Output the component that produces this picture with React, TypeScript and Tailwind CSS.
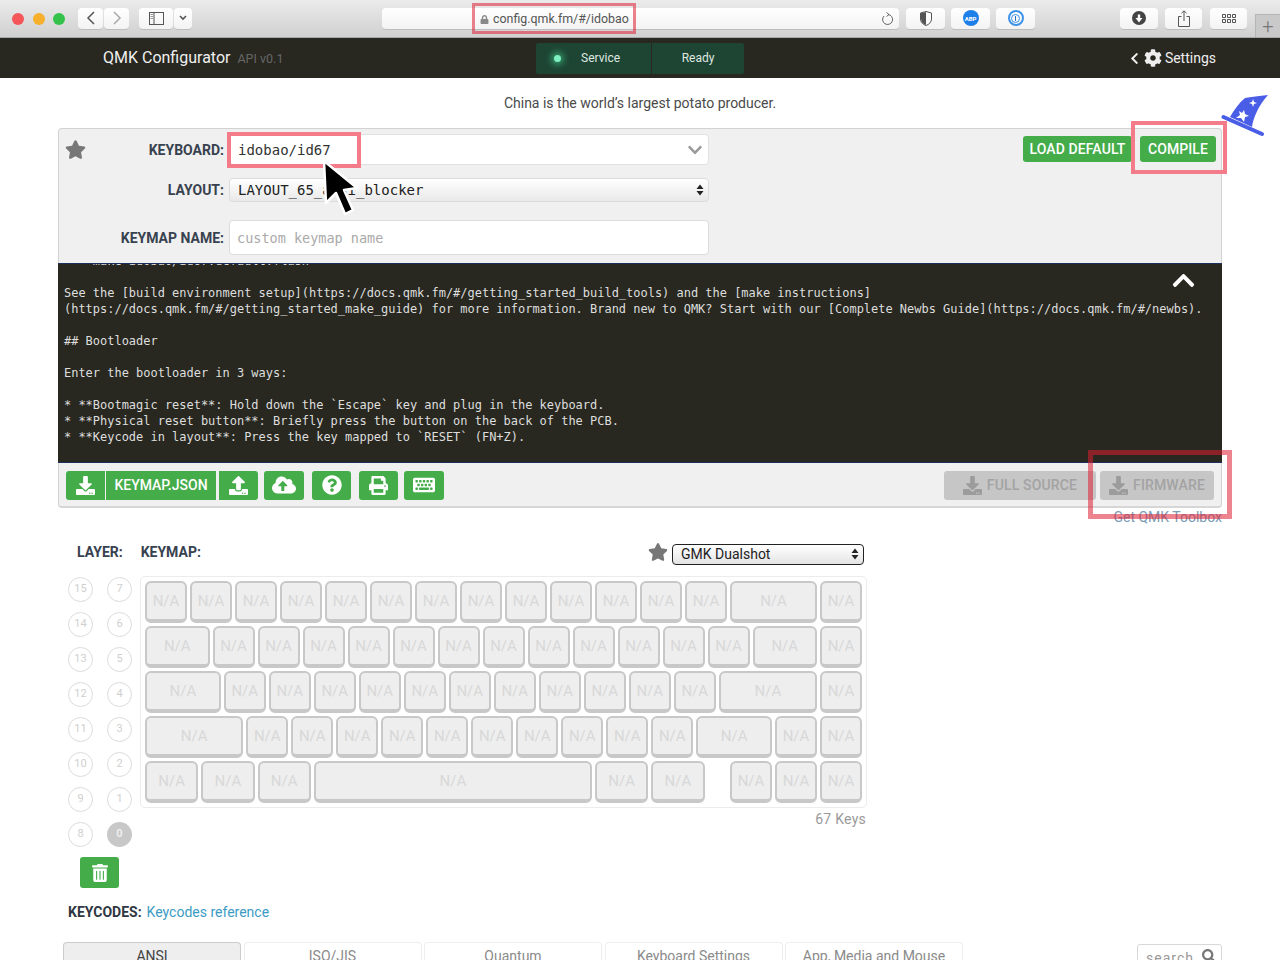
import { FaCloudUploadAlt, FaCog, FaChevronDown, FaChevronLeft, FaChevronUp, FaDownload, FaKeyboard, FaLock, FaPrint, FaQuestionCircle, FaSearch, FaStar, FaTrashAlt, FaUpload } from 'react-icons/fa';

const TERMINAL = `    make idobao/id67:default:flash

See the [build environment setup](https://docs.qmk.fm/#/getting_started_build_tools) and the [make instructions]
(https://docs.qmk.fm/#/getting_started_make_guide) for more information. Brand new to QMK? Start with our [Complete Newbs Guide](https://docs.qmk.fm/#/newbs).

## Bootloader

Enter the bootloader in 3 ways:

* **Bootmagic reset**: Hold down the \`Escape\` key and plug in the keyboard.
* **Physical reset button**: Briefly press the button on the back of the PCB.
* **Keycode in layout**: Press the key mapped to \`RESET\` (FN+Z).`;

// widths in key units, negative is an empty gap
const ROWS = [
  [1, 1, 1, 1, 1, 1, 1, 1, 1, 1, 1, 1, 1, 2, 1],
  [1.5, 1, 1, 1, 1, 1, 1, 1, 1, 1, 1, 1, 1, 1.5, 1],
  [1.75, 1, 1, 1, 1, 1, 1, 1, 1, 1, 1, 1, 2.25, 1],
  [2.25, 1, 1, 1, 1, 1, 1, 1, 1, 1, 1, 1.75, 1, 1],
  [1.25, 1.25, 1.25, 6.25, 1.25, 1.25, -0.5, 1, 1, 1],
];

const LAYERS = [15, 7, 14, 6, 13, 5, 12, 4, 11, 3, 10, 2, 9, 1, 8, 0];
const TABS = ['ANSI', 'ISO/JIS', 'Quantum', 'Keyboard Settings', 'App, Media and Mouse'];

function ChromeButton({ className, children }: { className: string; children?: React.ReactNode }) {
  return (
    <div className={`flex h-[22px] items-center justify-center rounded-[4px] border-b border-[#bdbdbd] bg-gradient-to-b from-white to-[#f3f3f3] ${className}`}>
      {children}
    </div>
  );
}

function GreenButton({ className, children }: { className: string; children?: React.ReactNode }) {
  return (
    <div className={`flex h-[29px] items-center justify-center rounded-[3px] bg-[#45ac4a] text-white ${className}`}>
      {children}
    </div>
  );
}

function Key({ units }: { units: number }) {
  if (units < 0) return <div className="h-[42px]" style={{ width: -units * 45 - 3 }} />;
  return (
    <div
      className="flex h-[42px] items-center justify-center rounded-[6px] border-2 border-b-[4px] border-[#c8c8c8] bg-[#eeeeee] pt-[1px] text-[15px] text-[#d8d8d8]"
      style={{ width: units * 45 - 3 }}
    >
      N/A
    </div>
  );
}

export default function App() {
  return (
    <div className="relative h-[960px] w-[1280px] overflow-hidden bg-white font-['Roboto',sans-serif] text-[14px] text-[#444]">
      {/* safari toolbar */}
      <div className="flex h-[38px] items-center border-b border-[#a9a9a9] bg-gradient-to-b from-[#ebebeb] to-[#d0d0d0] pl-[12px]">
        <div className="h-[12px] w-[12px] rounded-full bg-[#f4565a]" />
        <div className="ml-[9px] h-[12px] w-[12px] rounded-full bg-[#f6b02c]" />
        <div className="ml-[8px] h-[12px] w-[12px] rounded-full bg-[#35c24a]" />
        <ChromeButton className="ml-[13px] w-[25px]">
          <svg width="10" height="16" viewBox="0 0 10 16" fill="none" stroke="#555" strokeWidth="1.5"><path d="M8 2 L2 8 L8 14" /></svg>
        </ChromeButton>
        <ChromeButton className="ml-[1px] w-[25px]">
          <svg width="10" height="16" viewBox="0 0 10 16" fill="none" stroke="#aaa" strokeWidth="1.5"><path d="M2 2 L8 8 L2 14" /></svg>
        </ChromeButton>
        <ChromeButton className="ml-[10px] w-[34px]">
          <svg width="15" height="13" viewBox="0 0 15 13" fill="none" stroke="#555"><rect x="0.5" y="0.5" width="14" height="12" /><path d="M5 0.5 V12.5" /><path d="M1.5 2.5 H4 M1.5 4.5 H4 M1.5 6.5 H4" stroke="#999" /></svg>
        </ChromeButton>
        <ChromeButton className="ml-[1px] w-[18px]">
          <svg width="8" height="6" viewBox="0 0 8 6" fill="none" stroke="#555" strokeWidth="1.6"><path d="M1 1 L4 4 L7 1" /></svg>
        </ChromeButton>
        <ChromeButton className="relative ml-[190px] w-[517px] !justify-start pl-[98px]">
          <div className="flex items-center gap-[4px] pt-[3px] text-[12.4px] text-[#555]">
            <FaLock className="text-[9px] text-[#888]" />
            config.qmk.fm/#/idobao
          </div>
          <svg className="absolute right-[5px] top-[4px]" width="13" height="14" viewBox="0 0 13 14" fill="none" stroke="#666"><path d="M7 2.5 A5 5 0 1 1 3 4" /><path d="M5.5 0.5 L8 2.5 L5.5 4.5" /></svg>
        </ChromeButton>
        <ChromeButton className="ml-[7px] w-[39px]">
          <svg width="12" height="15" viewBox="0 0 12 15"><path d="M6 0.5 L11.5 2 V8 C11.5 11 9 13.5 6 14.5 C3 13.5 0.5 11 0.5 8 V2 Z" fill="#fff" stroke="#555" /><path d="M1 2.3 L6 1 V14 C3 13 1 11 1 8 Z" fill="#555" /></svg>
        </ChromeButton>
        <ChromeButton className="ml-[6px] w-[39px]">
          <div className="flex h-[16px] w-[16px] items-center justify-center rounded-full bg-[#1f7fe8] text-[6px] font-bold text-white">ABP</div>
        </ChromeButton>
        <ChromeButton className="ml-[6px] w-[39px]">
          <div className="flex h-[16px] w-[16px] items-center justify-center rounded-full border-[2px] border-[#3c93e8]">
            <div className="flex h-[9px] w-[9px] items-center justify-center rounded-full border border-[#3c93e8]">
              <div className="h-[5px] w-[1.5px] bg-[#1f6fc8]" />
            </div>
          </div>
        </ChromeButton>
        <ChromeButton className="ml-[85px] w-[38px]">
          <div className="flex h-[14px] w-[14px] items-center justify-center rounded-full bg-[#444]">
            <svg width="8" height="9" viewBox="0 0 8 9" fill="#fff"><path d="M2.8 0.5 H5.2 V4 H7.5 L4 8.5 L0.5 4 H2.8 Z" /></svg>
          </div>
        </ChromeButton>
        <ChromeButton className="ml-[7px] w-[37px]">
          <svg width="12" height="17" viewBox="0 0 12 17" fill="none" stroke="#555"><path d="M3.5 6.5 H0.5 V16.5 H11.5 V6.5 H8.5" /><path d="M6 11 V1 M3.5 3.2 L6 0.8 L8.5 3.2" /></svg>
        </ChromeButton>
        <ChromeButton className="ml-[8px] w-[37px]">
          <svg width="14" height="9" viewBox="0 0 14 9" fill="none" stroke="#555"><path d="M0.5 0.5 h3 v3 h-3 z M5.5 0.5 h3 v3 h-3 z M10.5 0.5 h3 v3 h-3 z M0.5 5.5 h3 v3 h-3 z M5.5 5.5 h3 v3 h-3 z M10.5 5.5 h3 v3 h-3 z" /></svg>
        </ChromeButton>
        <div className="ml-[8px] flex h-[23px] w-[25px] items-center justify-center self-end border-l border-t border-[#b5b5b5] bg-[#c9c9c9] text-[20px] font-light leading-none text-[#777]">+</div>
      </div>

      {/* nav bar */}
      <div className="flex h-[40px] items-center bg-[#282820] pl-[103px] pr-[64px] text-white">
        <div className="flex w-[433px] items-baseline">
          <span className="text-[16px] text-[#f0f0f0]">QMK Configurator</span>
          <span className="ml-[7px] text-[12.5px] text-[#666]">API v0.1</span>
        </div>
        <div className="flex h-[31px] text-[12px] text-[#dfe8e0]">
          <div className="flex w-[115px] items-center rounded-l-[2px] bg-[#1e4534] pl-[18px]">
            <div className="h-[7px] w-[7px] rounded-full bg-[#7ff0c0] shadow-[0_0_6px_3px_rgba(70,220,150,0.55)]" />
            <span className="ml-[20px]">Service</span>
          </div>
          <div className="ml-[1px] flex w-[92px] items-center justify-center rounded-r-[2px] bg-[#1e4534]">Ready</div>
        </div>
        <div className="ml-auto flex items-center text-[14px] text-[#eee]">
          <FaChevronLeft className="text-[13px]" />
          <FaCog className="ml-[3px] text-[18px]" />
          <span className="ml-[3px]">Settings</span>
        </div>
      </div>

      <div className="flex h-[50px] items-center justify-center text-[14px] text-[#4a4a4a]">China is the world&rsquo;s largest potato producer.</div>

      {/* main panel */}
      <div className="mx-[58px] w-[1164px] rounded-[4px] border-b-2 border-l border-r border-t border-[#d2d2d2] border-b-[#d6d6d6] bg-[#f0f0f0]">
        <div className="flex h-[134px] justify-between pr-[5px] pt-[5px]">
          <div className="w-[660px] font-bold text-[#38424f]">
            <div className="flex h-[31px] items-center">
              <div className="flex w-[165px] items-center justify-between pl-[6px]">
                <FaStar className="text-[21px] text-[#777]" />
                <span className="pt-[1px] text-[14px]">KEYBOARD:</span>
              </div>
              <div className="ml-[5px] flex h-[31px] w-[480px] items-center justify-between rounded-[4px] border border-[#e0e0e0] bg-white pl-[8px] pr-[5px] pt-[1px] font-['DejaVu_Sans_Mono',monospace] text-[14px] font-normal text-[#333]">
                idobao/id67
                <FaChevronDown className="text-[16px] text-[#999]" />
              </div>
            </div>
            <div className="mt-[13px] flex h-[24px] items-center">
              <div className="w-[165px] text-right">LAYOUT:</div>
              <div className="ml-[5px] flex h-[24px] w-[480px] items-center justify-between rounded-[4px] border border-[#dcdcdc] bg-gradient-to-b from-white to-[#e9e9e9] pl-[8px] pr-[4px] font-['DejaVu_Sans_Mono',monospace] text-[14px] font-normal text-[#222]">
                LAYOUT_65_ansi_blocker
                <svg width="8" height="12" viewBox="0 0 8 12" fill="#222"><path d="M4 0.5 L7.5 5 H0.5 Z M4 11.5 L0.5 7 H7.5 Z" /></svg>
              </div>
            </div>
            <div className="mt-[18px] flex h-[35px] items-center">
              <div className="w-[165px] pt-[1px] text-right">KEYMAP NAME:</div>
              <div className="ml-[5px] flex h-[35px] w-[480px] items-center rounded-[4px] border border-[#dcdcdc] bg-white pl-[7px] pt-[1px] font-['DejaVu_Sans_Mono',monospace] text-[13.5px] font-normal text-[#aaa]">custom keymap name</div>
            </div>
          </div>
          <div className="mt-[2px] flex h-[26px] gap-[8px] text-[14px] font-medium tracking-[0.1px]">
            <GreenButton className="!h-[26px] w-[109px]">LOAD DEFAULT</GreenButton>
            <GreenButton className="!h-[26px] w-[76px]">COMPILE</GreenButton>
          </div>
        </div>

        {/* terminal */}
        <div className="relative -mx-px h-[200px] overflow-hidden border-y border-[#1c2e5e] bg-[#282820] pl-[6px]">
          <pre className="-mt-[11px] font-['DejaVu_Sans_Mono',monospace] text-[11.97px] leading-[16px] text-[#dedede]">{TERMINAL}</pre>
          <FaChevronUp className="absolute right-[26px] top-[4px] text-[25px] text-white" />
        </div>

        {/* toolbar */}
        <div className="flex h-[43px] items-center justify-between pl-[7px] pr-[7px] pt-[1px]">
          <div className="flex text-[14px] font-medium">
            <GreenButton className="w-[39px] rounded-r-none"><FaDownload className="text-[19px]" /></GreenButton>
            <GreenButton className="ml-[1px] w-[110px] rounded-l-none rounded-r-none">KEYMAP.JSON</GreenButton>
            <GreenButton className="ml-[3px] w-[39px] rounded-l-none"><FaUpload className="text-[19px]" /></GreenButton>
            <GreenButton className="ml-[6px] w-[40px]"><FaCloudUploadAlt className="text-[24px]" /></GreenButton>
            <GreenButton className="ml-[8px] w-[39px]"><FaQuestionCircle className="text-[20px]" /></GreenButton>
            <GreenButton className="ml-[8px] w-[39px]"><FaPrint className="text-[19px]" /></GreenButton>
            <GreenButton className="ml-[6px] w-[40px]"><FaKeyboard className="text-[22px]" /></GreenButton>
          </div>
          <div className="flex text-[14px] font-medium tracking-[0.15px] text-[#a3a3a3]">
            <div className="flex h-[29px] w-[152px] items-center justify-center gap-[5px] rounded-[3px] bg-[#c6c6c6]"><FaDownload className="text-[19px] text-[#9c9c9c]" />FULL SOURCE</div>
            <div className="ml-[4px] flex h-[29px] w-[114px] items-center justify-center gap-[5px] rounded-[3px] bg-[#c6c6c6]"><FaDownload className="text-[19px] text-[#9c9c9c]" />FIRMWARE</div>
          </div>
        </div>
      </div>

      <div className="mx-[58px] -mt-[1px] flex h-[20px] items-center justify-end text-[14px] text-[#7c9db5]">Get QMK Toolbox</div>

      {/* keymap heading */}
      <div className="mt-[15px] flex h-[22px] items-center pl-[77px] pr-[416px] text-[14px] font-bold text-[#38424f]">
        <span className="mb-[2px]">LAYER:</span>
        <span className="mb-[2px] ml-[18px]">KEYMAP:</span>
        <FaStar className="mb-[2px] ml-auto text-[20px] text-[#777]" />
        <div className="ml-[4px] mt-[2px] flex h-[21px] w-[192px] items-center justify-between rounded-[4px] border border-[#222] bg-gradient-to-b from-white to-[#e4e4e4] pl-[8px] pr-[4px] text-[14px] font-normal text-[#222]">
          GMK Dualshot
          <svg width="8" height="12" viewBox="0 0 8 12" fill="#222"><path d="M4 0.5 L7.5 5 H0.5 Z M4 11.5 L0.5 7 H7.5 Z" /></svg>
        </div>
      </div>

      {/* layers and keyboard */}
      <div className="mt-[12px] flex pl-[68px]">
        <div className="w-[72px]">
          <div className="grid w-[64px] grid-cols-[25px_25px] gap-x-[14px] gap-y-[10px] pt-[1px]">
            {LAYERS.map((layer) => (
              <div
                key={layer}
                className={`flex h-[25px] w-[25px] items-center justify-center rounded-full text-[11px] ${
                  layer === 0 ? 'bg-[#c8c8c8] font-bold text-[#eee]' : 'border border-[#dcdcdc] text-[#cfcfcf]'
                }`}
              >
                {layer}
              </div>
            ))}
          </div>
          <div className="ml-[12px] mt-[10px] flex h-[31px] w-[39px] items-center justify-center rounded-[3px] bg-[#45ac4a] text-white">
            <FaTrashAlt className="text-[18px]" />
          </div>
        </div>
        <div className="w-[727px]">
          <div className="flex flex-col gap-[3px] rounded-[5px] border border-[#ececec] p-[4px]">
            {ROWS.map((row, r) => (
              <div key={r} className="flex gap-[3px]">
                {row.map((units, k) => <Key key={k} units={units} />)}
              </div>
            ))}
          </div>
          <div className="mt-[1px] pr-[1px] text-right text-[14px] tracking-[0.25px] text-[#9a9a9a]">67 Keys</div>
        </div>
      </div>

      <div className="mt-[14px] flex h-[20px] items-center pl-[68px] text-[14px]">
        <span className="font-bold text-[#2f3742]">KEYCODES:</span>
        <span className="ml-[5px] text-[#3c9bc4]">Keycodes reference</span>
      </div>

      {/* keycode tabs */}
      <div className="mt-[20px] flex pl-[63px] pr-[58px] text-[14px]">
        {TABS.map((tab, i) => (
          <div
            key={tab}
            className={`ml-[2.5px] flex h-[30px] w-[178px] justify-center rounded-t-[4px] border-x border-t pt-[3px] first:ml-0 ${
              i === 0 ? 'border-[#cccccc] bg-[#eeeeee] text-[#444]' : 'border-[#eeeeee] bg-white text-[#8a8a8a]'
            }`}
          >
            {tab}
          </div>
        ))}
        <div className="ml-auto mt-[2px] flex h-[30px] w-[85px] items-start justify-between rounded-[3px] border border-[#d8d8d8] pl-[8px] pr-[5px] pt-[3px] tracking-[1px] text-[#999]">
          search
          <FaSearch className="mt-[1px] text-[14px] text-[#777]" />
        </div>
      </div>

      {/* annotations on top of the screenshot */}
      <div className="absolute left-[472px] top-[3px] h-[31px] w-[164px] border-[3px] border-[rgba(220,30,50,0.55)]" />
      <div className="absolute left-[227px] top-[132px] h-[36px] w-[134px] border-[4px] border-[#f47c8a]" />
      <div className="absolute left-[1131px] top-[121px] h-[53px] w-[96px] border-[4px] border-[#f47c8a]" />
      <div className="absolute left-[1088px] top-[450px] h-[69px] w-[144px] border-[5px] border-[rgba(220,30,50,0.55)]" />
      <svg className="absolute left-[320px] top-[158px]" width="40" height="60" viewBox="0 0 40 60">
        <path d="M4 3 L6 45 L16 35 L25 56 L33 52 L24 32 L37 30 Z" fill="#000" stroke="#fff" strokeWidth="2.5" strokeLinejoin="round" />
      </svg>
      <svg className="absolute left-[1221px] top-[93px]" width="48" height="44" viewBox="0 0 48 44">
        <path d="M47 2 C38 3 30 4 24 5 C18 10 13 17 9 24 L31 34 C32 26 37 13 47 2 Z" fill="#4a5de6" />
        <path d="M2.5 24 L41 41" stroke="#4a5de6" strokeWidth="4" strokeLinecap="round" />
        <path d="M23 17 L24 21 L28 23 L24 24 L23 29 L20 25 L15 25 L19 22 L18 18 L21 20 Z" fill="#fff" />
        <path d="M32 6 L33 9 L36 10 L33 11 L32 14 L31 11 L28 10 L31 9 Z" fill="#fff" />
      </svg>
    </div>
  );
}
